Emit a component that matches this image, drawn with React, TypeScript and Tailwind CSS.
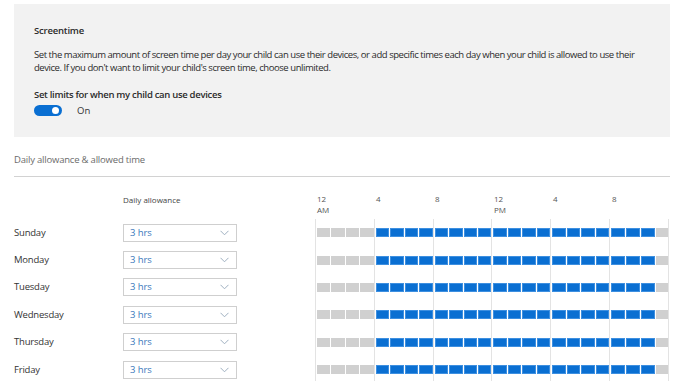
import React from "react";

const days = ["Sunday", "Monday", "Tuesday", "Wednesday", "Thursday", "Friday"];
const hours = Array.from({ length: 24 }, (_, i) => i);
const blocks = [0, 1, 2, 3, 4, 5];

function Chevron() {
  return (
    <svg width="9" height="6" viewBox="0 0 9 6" fill="none">
      <polyline points="0.5,0.8 4.5,4.8 8.5,0.8" stroke="#9fb0c0" strokeWidth="1" />
    </svg>
  );
}

function Row({ day }: { day: string }) {
  return (
    <div className="flex h-[27.4px] items-center">
      <div className="w-[109px] text-[9.5px] tracking-[-0.2px] text-[#333]">{day}</div>
      <div className="flex h-[18px] w-[114px] items-center justify-between border border-[#cfcfcf] bg-white pl-[6px] pr-[7px] text-[9.5px] tracking-[-0.1px] text-[#3a78bb]">
        <span>3 hrs</span>
        <Chevron />
      </div>
      <div className="w-[78px]" />
      <div className="flex h-full w-[354px] border-r border-[#e3e3e3]">
        {blocks.map((b) => (
          <div key={b} className="flex h-full flex-1 items-center gap-[1px] border-l border-[#e3e3e3] pl-[1px]">
            {hours.slice(b * 4, b * 4 + 4).map((h) => (
              <div
                key={h}
                className={
                  h >= 4 && h <= 22
                    ? "h-[9px] flex-1 border border-[#3d8fe0] bg-[#0a6fd2]"
                    : "h-[9px] flex-1 bg-[#d0d0d0]"
                }
              />
            ))}
          </div>
        ))}
      </div>
    </div>
  );
}

export default function App() {
  const labels = [
    ["12", "AM"],
    ["4", ""],
    ["8", ""],
    ["12", "PM"],
    ["4", ""],
    ["8", ""],
  ];
  return (
    <div
      className="h-[381px] w-[680px] overflow-hidden bg-white pl-[14px] pr-[10px] pt-[4px]"
      style={{ fontFamily: '"Open Sans", "Noto Sans", sans-serif' }}
    >
      <div className="bg-[#f2f2f2] px-[20px] pb-[20px] pt-[20px] text-[#2b2b2b]">
        <div className="text-[9.5px] font-semibold leading-[13px] tracking-[-0.2px]">Screentime</div>
        <div className="mt-[11px] text-[9.5px] leading-[13px] tracking-[-0.45px]">
          Set the maximum amount of screen time per day your child can use their devices, or add specific times each day when your child is allowed to use their device. If you don't want to limit your child's screen time, choose unlimited.
        </div>
        <div className="mt-[14px] text-[9.5px] font-semibold leading-[13px] tracking-[-0.3px]">
          Set limits for when my child can use devices
        </div>
        <div className="mt-[3px] flex items-center">
          <div className="relative h-[11px] w-[28px] rounded-full bg-[#0a6fd2]">
            <div className="absolute right-[3px] top-[2px] h-[7px] w-[7px] rounded-full bg-white" />
          </div>
          <span className="ml-[15px] text-[9.5px] leading-[13px] text-[#333]">On</span>
        </div>
      </div>

      <div className="mt-[16px] text-[9.5px] leading-[13px] tracking-[-0.2px] text-[#6b6b6b]">Daily allowance &amp; allowed time</div>
      <div className="mt-[10px] h-[1px] w-[656px] bg-[#d2d2d2]" />

      <div className="mt-[16px] flex h-[26px]">
        <div className="w-[109px]" />
        <div className="w-[114px] pt-[1px] text-[8px] leading-[11px] text-[#444]">Daily allowance</div>
        <div className="w-[78px]" />
        <div className="flex w-[354px]">
          {labels.map(([a, b], i) => (
            <div key={i} className="flex-1 pl-[2px] text-[8px] leading-[11px] text-[#555]">
              <div>{a}</div>
              {b && <div>{b}</div>}
            </div>
          ))}
        </div>
      </div>

      <div>
        {days.map((d) => (
          <Row key={d} day={d} />
        ))}
      </div>
    </div>
  );
}
